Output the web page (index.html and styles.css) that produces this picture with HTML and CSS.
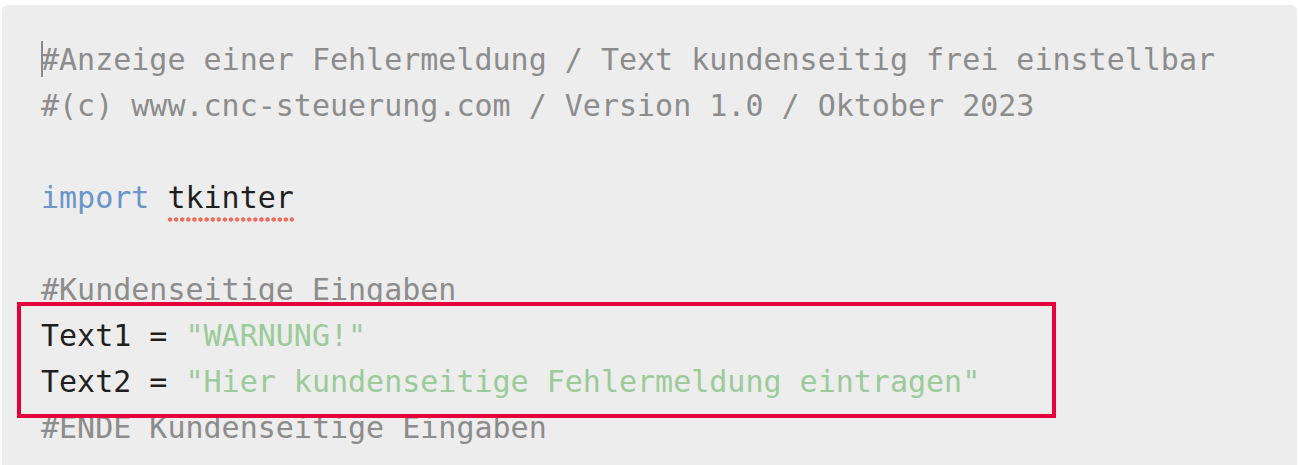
FILE: index.html
```html
<!DOCTYPE html>
<html lang="de">
<head>
<meta charset="utf-8">
<title>Code</title>
<link rel="stylesheet" href="styles.css">
</head>
<body>
<div class="panel">
<div class="code">
<div class="line c"><span class="cursor"></span>#Anzeige einer Fehlermeldung / Text kundenseitig frei einstellbar</div>
<div class="line c">#(c) www.cnc-steuerung.com / Version 1.0 / Oktober 2023</div>
<div class="line"></div>
<div class="line"><span class="k">import</span> <span class="spell">tkinter</span></div>
<div class="line"></div>
<div class="line c">#Kundenseitige Eingaben</div>
<div class="mark">
<div class="line">Text1 = <span class="s">"WARNUNG!"</span></div>
<div class="line">Text2 = <span class="s">"Hier kundenseitige Fehlermeldung eintragen"</span></div>
</div>
<div class="line c">#ENDE Kundenseitige Eingaben</div>
</div>
</div>
</body>
</html>
```
FILE: styles.css
```css
html, body {
  margin: 0;
  padding: 0;
  background: #ffffff;
  height: 465px;
  overflow: hidden;
}
.panel {
  margin: 5px 2px 0 2px;
  background: #ededed;
  border-radius: 6px 6px 0 0;
  padding: 32px 0 14px 39px;
}
.code {
  font-family: "DejaVu Sans Mono", monospace;
  font-size: 30px;
  line-height: 46px;
  color: #1f1f1f;
}
.line {
  height: 46px;
  white-space: pre;
  position: relative;
}
.c { color: #8c8c8c; }
.k { color: #6a95c9; }
.s { color: #9bcb98; }
.spell {
  position: relative;
}
.spell::after {
  content: "";
  position: absolute;
  left: 0;
  right: 0;
  bottom: -7px;
  height: 5px;
  background-image: radial-gradient(circle, #ef6b5c 1.9px, transparent 2.4px);
  background-size: 6.1px 5px;
  background-repeat: repeat-x;
}
.cursor {
  position: absolute;
  left: 0;
  top: 4px;
  width: 2px;
  height: 36px;
  background: #8a8a8a;
}
.mark {
  position: relative;
  z-index: 1;
  width: 1039px;
  box-sizing: border-box;
  border: 4px solid #e6003a;
  margin: -11px 0 -13px -24px;
  padding: 7px 0 9px 20px;
}
```
